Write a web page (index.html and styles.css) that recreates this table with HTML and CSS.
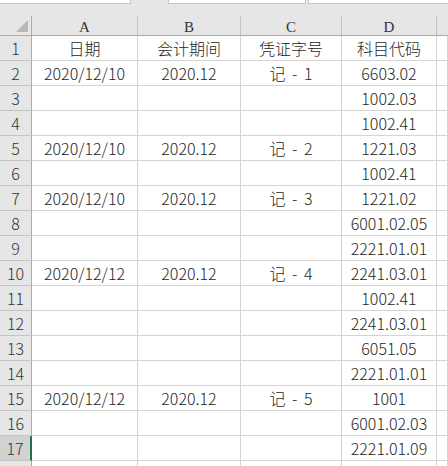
FILE: index.html
```html
<!DOCTYPE html>
<html lang="zh">
<head>
<meta charset="utf-8">
<link rel="stylesheet" href="styles.css">
</head>
<body>
<div class="topbar">
  <div class="box box-name"></div>
  <div class="box box-fx"></div>
  <div class="box box-formula"></div>
</div>
<div class="sheet">
  <div class="corner"><span class="tri"></span></div>
  <div class="colhdr">A</div>
  <div class="colhdr">B</div>
  <div class="colhdr">C</div>
  <div class="colhdr">D</div>
  <div class="colhdr last"></div>

  <div class="rowhdr">1</div><div class="cell">日期</div><div class="cell">会计期间</div><div class="cell">凭证字号</div><div class="cell">科目代码</div><div class="cell"></div>
  <div class="rowhdr">2</div><div class="cell">2020/12/10</div><div class="cell">2020.12</div><div class="cell voucher">记 - 1</div><div class="cell">6603.02</div><div class="cell"></div>
  <div class="rowhdr">3</div><div class="cell"></div><div class="cell"></div><div class="cell"></div><div class="cell">1002.03</div><div class="cell"></div>
  <div class="rowhdr">4</div><div class="cell"></div><div class="cell"></div><div class="cell"></div><div class="cell">1002.41</div><div class="cell"></div>
  <div class="rowhdr">5</div><div class="cell">2020/12/10</div><div class="cell">2020.12</div><div class="cell voucher">记 - 2</div><div class="cell">1221.03</div><div class="cell"></div>
  <div class="rowhdr">6</div><div class="cell"></div><div class="cell"></div><div class="cell"></div><div class="cell">1002.41</div><div class="cell"></div>
  <div class="rowhdr">7</div><div class="cell">2020/12/10</div><div class="cell">2020.12</div><div class="cell voucher">记 - 3</div><div class="cell">1221.02</div><div class="cell"></div>
  <div class="rowhdr">8</div><div class="cell"></div><div class="cell"></div><div class="cell"></div><div class="cell">6001.02.05</div><div class="cell"></div>
  <div class="rowhdr">9</div><div class="cell"></div><div class="cell"></div><div class="cell"></div><div class="cell">2221.01.01</div><div class="cell"></div>
  <div class="rowhdr">10</div><div class="cell">2020/12/12</div><div class="cell">2020.12</div><div class="cell voucher">记 - 4</div><div class="cell">2241.03.01</div><div class="cell"></div>
  <div class="rowhdr">11</div><div class="cell"></div><div class="cell"></div><div class="cell"></div><div class="cell">1002.41</div><div class="cell"></div>
  <div class="rowhdr">12</div><div class="cell"></div><div class="cell"></div><div class="cell"></div><div class="cell">2241.03.01</div><div class="cell"></div>
  <div class="rowhdr">13</div><div class="cell"></div><div class="cell"></div><div class="cell"></div><div class="cell">6051.05</div><div class="cell"></div>
  <div class="rowhdr">14</div><div class="cell"></div><div class="cell"></div><div class="cell"></div><div class="cell">2221.01.01</div><div class="cell"></div>
  <div class="rowhdr">15</div><div class="cell">2020/12/12</div><div class="cell">2020.12</div><div class="cell voucher">记 - 5</div><div class="cell">1001</div><div class="cell"></div>
  <div class="rowhdr">16</div><div class="cell"></div><div class="cell"></div><div class="cell"></div><div class="cell">6001.02.03</div><div class="cell"></div>
  <div class="rowhdr active">17</div><div class="cell"></div><div class="cell"></div><div class="cell"></div><div class="cell">2221.01.09</div><div class="cell"></div>
  <div class="rowhdr"></div><div class="cell"></div><div class="cell"></div><div class="cell"></div><div class="cell"></div><div class="cell"></div>
</div>
</body>
</html>
```

FILE: styles.css
```css
html, body {
  margin: 0;
  padding: 0;
  background: #e6e6e6;
  overflow: hidden;
}
body {
  width: 448px;
  height: 466px;
  font-family: "Noto Sans CJK SC", "Noto Sans", sans-serif;
}
.topbar {
  height: 16px;
  display: flex;
  align-items: flex-start;
  background: #e6e6e6;
}
.box {
  height: 3px;
  background: #fff;
  border: 1px solid #c6c6c6;
  border-top: none;
}
.box-name { width: 130px; border-left: none; }
.box-fx { width: 136px; margin-left: 37px; }
.box-formula { flex: 1; margin-left: 2px; border-right: none; }

.sheet {
  display: grid;
  grid-template-columns: 32px 106px 103px 101px 95px 1fr;
  grid-template-rows: 20px repeat(18, 25px);
  background: #fff;
}
.corner, .colhdr, .rowhdr {
  background: #e6e6e6;
  color: #444;
  box-sizing: border-box;
}
.corner {
  position: relative;
  border-right: 1px solid #ababab;
  border-bottom: 1px solid #ababab;
}
.tri {
  position: absolute;
  right: 3px;
  bottom: 3px;
  width: 0;
  height: 0;
  border-left: 12px solid transparent;
  border-bottom: 12px solid #b8b8b8;
}
.colhdr {
  border-right: 1px solid #c4c4c4;
  border-bottom: 1px solid #ababab;
  display: flex;
  align-items: center;
  justify-content: center;
  font-family: "Liberation Serif", "DejaVu Serif", serif;
  font-size: 15px;
  color: #333;
  padding-top: 3px;
}
.colhdr.last { border-right: none; }
.rowhdr {
  border-right: 1px solid #ababab;
  border-bottom: 1px solid #c4c4c4;
  display: flex;
  align-items: center;
  justify-content: center;
  font-size: 16px;
  font-weight: 300;
  color: #333;
}
.rowhdr.active {
  background: #d2d2d2;
  border-right: 2px solid #217346;
}
.cell {
  box-sizing: border-box;
  border-right: 1px solid #d4d4d4;
  border-bottom: 1px solid #d4d4d4;
  display: flex;
  align-items: center;
  justify-content: center;
  font-size: 16px;
  font-weight: 300;
  color: #262626;
  white-space: pre;
  overflow: hidden;
}
.voucher {
  word-spacing: 3px;
}
```
